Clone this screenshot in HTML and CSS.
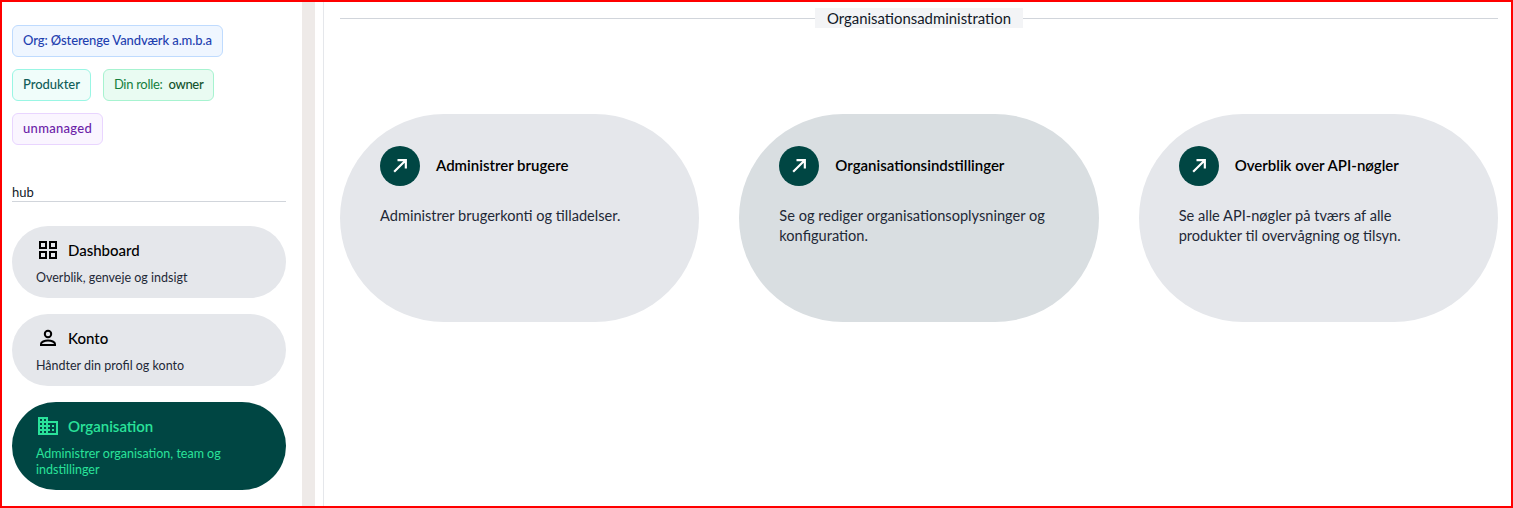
FILE: index.html
```html
<!DOCTYPE html>
<html lang="en">

<head>
  <meta charset="UTF-8">
  <meta name="viewport" content="width=device-width, initial-scale=1.0">
  <title>Organisationsadministration</title>
  <link rel="stylesheet" href="styles.css">
</head>

<body>
  <div class="app">
    <aside class="sidebar">
      <div class="badges">
        <span class="badge badge-org">Org: Østerenge Vandværk a.m.b.a</span>
        <span class="badge badge-product">Produkter</span>
        <span class="badge badge-role"><span class="role-label">Din rolle:</span> owner</span>
        <span class="badge badge-managed">unmanaged</span>
      </div>

      <div class="nav-title">hub</div>

      <nav class="nav">
        <a class="nav-item" href="#">
          <span class="nav-head">
            <svg class="nav-icon" viewBox="0 0 24 24" fill="none" stroke="currentColor" stroke-width="2">
              <rect x="4" y="4" width="6" height="6" />
              <rect x="14" y="4" width="6" height="6" />
              <rect x="4" y="14" width="6" height="6" />
              <rect x="14" y="14" width="6" height="6" />
            </svg>
            Dashboard
          </span>
          <span class="nav-text">Overblik, genveje og indsigt</span>
        </a>
        <a class="nav-item" href="#">
          <span class="nav-head">
            <svg class="nav-icon" viewBox="0 0 24 24" fill="none" stroke="currentColor" stroke-width="2">
              <circle cx="12" cy="8" r="3.200" />
              <path d="M5 19v-1c0-2 3.500-3.500 7-3.500s7 1.500 7 3.500v1z" />
            </svg>
            Konto
          </span>
          <span class="nav-text">Håndter din profil og konto</span>
        </a>
        <a class="nav-item active" href="#">
          <span class="nav-head">
            <svg class="nav-icon" viewBox="0 0 24 24" fill="currentColor">
              <path fill-rule="evenodd" d="M2 3h10v4h10v14H2zM4 5v2h2V5zM8 5v2h2V5zM4 9v2h2V9zM8 9v2h2V9zM4 13v2h2v-2zM8 13v2h2v-2zM4 17v2h2v-2zM8 17v2h2v-2zM12 9v2h2v2h-2v2h2v2h-2v2h8V9zM16 11h2v2h-2zM16 15h2v2h-2z" />
            </svg>
            Organisation
          </span>
          <span class="nav-text">Administrer organisation, team og indstillinger</span>
        </a>
      </nav>
    </aside>

    <div class="gutter"></div>

    <main class="content">
      <div class="divider"><span class="divider-label">Organisationsadministration</span></div>

      <div class="cards">
        <a class="card" href="#">
          <div class="card-head">
            <span class="card-icon">
              <svg viewBox="0 0 24 24" fill="none" stroke="currentColor" stroke-width="2.600">
                <path d="M5 19L18 6M9 5h10v10" />
              </svg>
            </span>
            <h3>Administrer brugere</h3>
          </div>
          <p>Administrer brugerkonti og tilladelser.</p>
        </a>
        <a class="card hover" href="#">
          <div class="card-head">
            <span class="card-icon">
              <svg viewBox="0 0 24 24" fill="none" stroke="currentColor" stroke-width="2.600">
                <path d="M5 19L18 6M9 5h10v10" />
              </svg>
            </span>
            <h3>Organisationsindstillinger</h3>
          </div>
          <p>Se og rediger organisationsoplysninger og konfiguration.</p>
        </a>
        <a class="card" href="#">
          <div class="card-head">
            <span class="card-icon">
              <svg viewBox="0 0 24 24" fill="none" stroke="currentColor" stroke-width="2.600">
                <path d="M5 19L18 6M9 5h10v10" />
              </svg>
            </span>
            <h3>Overblik over API-nøgler</h3>
          </div>
          <p>Se alle API-nøgler på tværs af alle produkter til overvågning og tilsyn.</p>
        </a>
      </div>
    </main>
  </div>
</body>

</html>
```

FILE: styles.css
```css
* {
  box-sizing: border-box;
}

body {
  margin: 0;
  font-family: 'Lato', 'Liberation Sans', sans-serif;
  color: #111827;
  background-color: #fff;
}

a {
  color: inherit;
  text-decoration: none;
}

.app {
  display: flex;
  height: 508px;
  border: 2px solid #f00;
  overflow: hidden;
}

.sidebar {
  width: 300px;
  flex-shrink: 0;
  padding: 23px 16px 0 10px;
}

.badges {
  display: flex;
  flex-wrap: wrap;
  gap: 12px;
  margin-bottom: 38px;
}

.badge {
  display: inline-block;
  height: 32px;
  line-height: 29px;
  padding: 0 10px;
  font-size: 13px;
  font-weight: 500;
  border: 1px solid;
  border-radius: 6px;
}

.badge-org {
  color: #1e40af;
  background-color: #eff6ff;
  border-color: #bfdbfe;
  letter-spacing: -0.1px;
  margin-right: 50px;
}

.badge-product {
  color: #115e59;
  background-color: #f0fdfa;
  border-color: #99f6e4;
  letter-spacing: -0.04px;
}

.badge-role {
  color: #14532d;
  background-color: #e9fbf2;
  border-color: #a7f3d0;
  letter-spacing: -0.3px;
}

.role-label {
  color: #15803d;
  font-weight: 400;
  margin-right: 3px;
}

.badge-managed {
  color: #6b21a8;
  background-color: #faf5ff;
  border-color: #e9d5ff;
  letter-spacing: 0.3px;
  margin-right: 100px;
}

.nav-title {
  font-size: 13px;
  line-height: 18px;
  border-bottom: 1px solid #d1d5db;
  margin-bottom: 24px;
}

.nav {
  display: flex;
  flex-direction: column;
  gap: 16px;
}

.nav-item {
  display: block;
  padding: 12px 24px;
  min-height: 72px;
  border-radius: 44px;
  background-color: #e5e7eb;
  color: #000;
}

.nav-head {
  display: flex;
  align-items: center;
  gap: 8px;
  height: 24px;
  font-size: 15px;
  font-weight: 500;
}

.nav-icon {
  width: 24px;
  height: 24px;
}

.nav-text {
  display: block;
  margin-top: 8px;
  font-size: 12.5px;
  line-height: 16px;
  color: #1f2937;
}

.nav-item.active {
  background-color: #004643;
  color: #2ae29a;
}

.nav-item.active .nav-head {
  font-weight: 600;
}

.nav-item.active .nav-text {
  color: #2ae29a;
}

.gutter {
  width: 22px;
  flex-shrink: 0;
  border-right: 1px solid #e5e7eb;
  background-image: linear-gradient(#eeeae8, #eeeae8);
  background-size: 13px 100%;
  background-repeat: no-repeat;
}

.content {
  flex: 1;
  padding: 6px 13px 0 16px;
}

.divider {
  display: flex;
  align-items: center;
  justify-content: center;
  height: 20px;
  margin-bottom: 86px;
  background-image: linear-gradient(#d1d5db, #d1d5db);
  background-size: 100% 1px;
  background-position: 0 10px;
  background-repeat: no-repeat;
}

.divider-label {
  padding: 0 12px;
  font-size: 14.9px;
  line-height: 20px;
  background-color: #f3f4f6;
}

.cards {
  display: grid;
  grid-template-columns: repeat(3, 1fr);
  gap: 40px;
}

.card {
  display: block;
  height: 208px;
  padding: 32px 40px;
  border-radius: 104px;
  background-color: #e5e7eb;
}

.card.hover {
  background-color: #d9dee1;
}

.card-head {
  display: flex;
  align-items: center;
  gap: 16px;
  margin-bottom: 20px;
}

.card-icon {
  display: flex;
  align-items: center;
  justify-content: center;
  width: 40px;
  height: 40px;
  border-radius: 50%;
  background-color: #004643;
  color: #fff;
}

.card-icon svg {
  width: 20px;
  height: 20px;
}

.card h3 {
  margin: 0 0 2px;
  font-size: 15px;
  font-weight: 600;
  color: #000;
}

.card p {
  margin: 0;
  font-size: 14.6px;
  line-height: 20px;
  color: #1f2937;
}
```
